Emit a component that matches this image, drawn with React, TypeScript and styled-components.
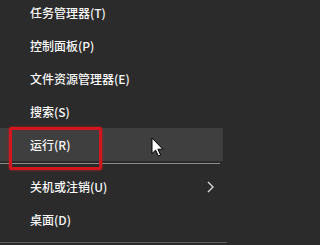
import styled, { createGlobalStyle } from "styled-components";

const GlobalStyle = createGlobalStyle`
  html, body {
    margin: 0;
    padding: 0;
    background: #2b2b2b;
  }
`;

const items = [
  { id: "task", label: "任务管理器(T)" },
  { id: "control", label: "控制面板(P)" },
  { id: "explorer", label: "文件资源管理器(E)" },
  { id: "search", label: "搜索(S)" },
  { id: "run", label: "运行(R)", active: true },
];

const bottomItems = [
  { id: "shutdown", label: "关机或注销(U)", sub: true },
  { id: "desktop", label: "桌面(D)" },
];

const App = () => {
  return (
    <>
      <GlobalStyle />
      <Menu>
        <List>
          {items.map((item) => (
            <Item key={item.id} $active={item.active}>
              {item.label}
            </Item>
          ))}
          <Separator />
          {bottomItems.map((item) => (
            <Item key={item.id}>
              {item.label}
              {item.sub ? (
                <Chevron width="7" height="12" viewBox="0 0 7 12">
                  <polyline
                    points="1,1 6,6 1,11"
                    fill="none"
                    stroke="#d8d8d8"
                    strokeWidth="1.4"
                  />
                </Chevron>
              ) : null}
            </Item>
          ))}
        </List>
        <Footer />
        <Highlight />
        <Cursor width="13" height="20" viewBox="0 0 13 20">
          <path
            d="M1 1 L1 16.5 L4.6 13.1 L7.4 19 L9.6 18 L6.9 12.2 L11.8 12.2 Z"
            fill="#ffffff"
            stroke="#000000"
            strokeWidth="1"
            strokeLinejoin="round"
          />
        </Cursor>
      </Menu>
    </>
  );
};

const Menu = styled.div`
  position: relative;
  width: 227px;
  height: 245px;
  overflow: hidden;
  background: #2b2b2b;
  font-family: "Noto Sans CJK SC", "Noto Sans", sans-serif;
`;

const List = styled.div`
  display: flex;
  flex-direction: column;
  width: 223px;
  margin-top: -4px;
`;

const Item = styled.div<{ $active?: boolean }>`
  display: flex;
  align-items: center;
  height: 33px;
  padding-left: 30px;
  padding-right: 12px;
  font-size: 12px;
  font-weight: 500;
  color: #f7f7f7;
  background: ${(p) => (p.$active ? "#3f3f3f" : "transparent")};
`;

const Separator = styled.div`
  height: 9px;
  &::before {
    content: "";
    display: block;
    margin-top: 2px;
    width: 220px;
    height: 1px;
    background: #8a8a8a;
  }
`;

const Chevron = styled.svg`
  margin-left: auto;
  margin-right: -3px;
`;

const Footer = styled.div`
  height: 6px;
  border-bottom: 1px solid #5c5c5c;
`;

const Highlight = styled.div`
  position: absolute;
  left: 9px;
  top: 127px;
  width: 87px;
  height: 37px;
  border: 3px solid #d3161d;
  border-radius: 2px;
  box-shadow: 0 0 3px rgba(220, 30, 30, 0.7);
`;

const Cursor = styled.svg`
  position: absolute;
  left: 151px;
  top: 137px;
`;

export default App;
